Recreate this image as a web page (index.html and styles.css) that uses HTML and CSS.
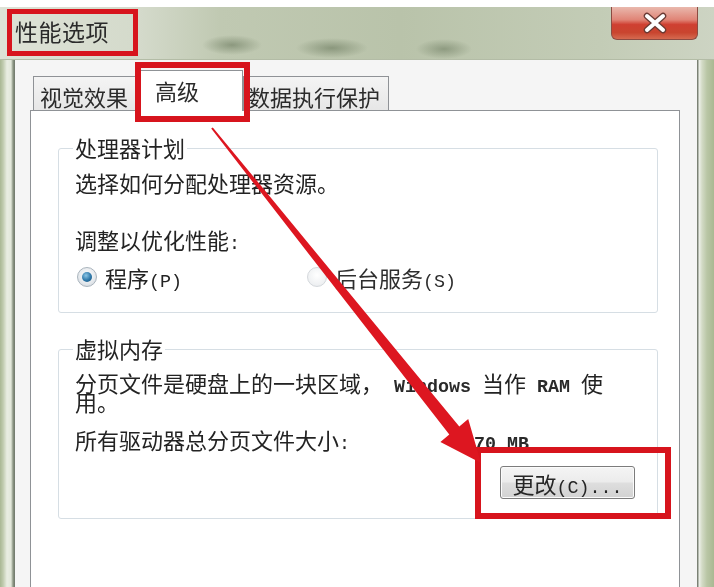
FILE: index.html
```html
<!DOCTYPE html>
<html lang="zh-CN">
<head>
<meta charset="utf-8">
<title>性能选项</title>
<link rel="stylesheet" href="styles.css">
</head>
<body>
<div class="screen">
  <div class="window">
    <div class="titlebar">
      <span class="title">性能选项</span>
      <div class="close">
        <svg width="26" height="22" viewBox="0 0 26 22">
          <path d="M5 4 L21 18 M21 4 L5 18" stroke="#6a3a34" stroke-width="6.5" stroke-linecap="round"/>
          <path d="M5 4 L21 18 M21 4 L5 18" stroke="#ffffff" stroke-width="4" stroke-linecap="round"/>
        </svg>
      </div>
    </div>
    <div class="frame-row">
      <div class="frame-l"></div>
      <div class="client">
        <div class="tabs">
          <div class="tab t1">视觉效果</div>
          <div class="tab active t2">高级</div>
          <div class="tab t3">数据执行保护</div>
        </div>
        <div class="panel">
          <fieldset class="group g1">
            <legend>处理器计划</legend>
            <p class="line">选择如何分配处理器资源。</p>
            <p class="line adjust">调整以优化性能<span class="hw">:</span></p>
            <div class="radios">
              <div class="radio"><span class="dot on"></span><span class="lab">程序<span class="hw">(P)</span></span></div>
              <div class="radio off"><span class="dot"></span><span class="lab">后台服务<span class="hw">(S)</span></span></div>
            </div>
          </fieldset>
          <fieldset class="group g2">
            <legend>虚拟内存</legend>
            <p class="wrap">分页文件是硬盘上的一块区域，<span class="hw b"> Windows </span>当作<span class="hw b"> RAM </span>使<br>用。</p>
            <div class="total"><span class="lbl">所有驱动器总分页文件大小<span class="hw">:</span></span><span class="val"><span class="hw b">4070 MB</span></span></div>
            <div class="btnrow"><button class="btn" type="button">更改<span class="hw">(C)...</span></button></div>
          </fieldset>
        </div>
      </div>
      <div class="frame-r"></div>
    </div>
  </div>
  <div class="mark mark-title"></div>
  <div class="mark mark-tab"></div>
  <div class="mark mark-btn"></div>
  <svg class="arrow" width="714" height="587" viewBox="0 0 714 587">
    <polygon points="212.8,127.4 459.3,426.4 468.2,419.1 481,463 440.4,441.9 449.3,434.6 211.2,128.6" fill="#dd1620"/>
  </svg>
</div>
</body>
</html>
```
FILE: styles.css
```css
* { box-sizing: border-box; }
html, body { margin: 0; padding: 0; }
body {
  width: 714px;
  height: 587px;
  overflow: hidden;
  background: #ffffff;
  font-family: "Noto Sans CJK SC", "Liberation Sans", sans-serif;
  color: #232323;
}
.screen {
  position: relative;
  width: 714px;
  height: 587px;
  padding-top: 7px;
  background: #ffffff;
}
.window {
  display: flex;
  flex-direction: column;
  height: 580px;
  filter: blur(0.3px);
}
.titlebar {
  height: 53px;
  display: flex;
  align-items: flex-start;
  padding-left: 15px;
  background:
    radial-gradient(ellipse 30px 10px at 232px 38px, rgba(105,120,92,0.6), rgba(105,120,92,0) 100%),
    radial-gradient(ellipse 36px 10px at 332px 41px, rgba(105,120,92,0.6), rgba(105,120,92,0) 100%),
    radial-gradient(ellipse 28px 10px at 444px 42px, rgba(105,120,92,0.55), rgba(105,120,92,0) 100%),
    linear-gradient(to right, #dde2d6 0, #d4dacb 140px, #c0c9b2 220px, #b9c3aa 400px, #c3ccb6 600px, #cdd4c3 714px);
  border-bottom: 1px solid #b3bca6;
}
.title {
  font-size: 23px;
  line-height: 26px;
  margin-top: 11px;
  letter-spacing: 0.5px;
  color: #2a2a2a;
}
.close {
  margin-left: auto;
  margin-right: 16px;
  width: 87px;
  height: 33px;
  display: flex;
  align-items: center;
  justify-content: center;
  border: 1px solid #8c4b42;
  border-top: none;
  border-radius: 0 0 6px 6px;
  background: linear-gradient(to bottom, #e9b8ad 0, #e08476 40%, #cf3f31 55%, #c9452f 80%, #d56a50 100%);
}
.frame-row {
  flex: 1;
  display: flex;
}
.frame-l {
  width: 15px;
  background: linear-gradient(to right, #a9b793 0, #bfcaad 3px, #e9ede2 7px, #e2e7da 11px, #8d9785 13px, #6d7568 15px);
}
.frame-r {
  width: 17px;
  background: linear-gradient(to right, #7b8275 0, #7b8275 1px, #eef1ea 2px, #d3dbc6 5px, #b9c6a5 10px, #a9b892 17px);
}
.client {
  flex: 1;
  display: flex;
  flex-direction: column;
  background: #f5f5f5;
  padding: 10px 17px 0 15px;
}
.tabs {
  display: flex;
  align-items: flex-end;
  height: 41px;
  margin-bottom: -1px;
  padding-left: 3px;
}
.tab {
  height: 35px;
  display: flex;
  align-items: center;
  padding-top: 3px;
  font-size: 22px;
  line-height: 26px;
  color: #2b2b2b;
  border: 1px solid #8f9296;
  border-bottom: none;
  background: linear-gradient(to bottom, #f4f4f4, #e6e6e6);
  white-space: nowrap;
}
.t1 { width: 104px; padding-left: 6px; }
.t3 { width: 146px; padding-left: 4px; }
.tab.active {
  position: relative;
  z-index: 1;
  width: 106px;
  height: 41px;
  padding-left: 17px;
  padding-top: 0;
  padding-bottom: 2px;
  background: #ffffff;
  border-color: #8f9296;
}
.panel {
  flex: 1;
  background: #ffffff;
  border: 1px solid #8f9296;
  border-bottom: none;
  padding: 25px 21px 0 27px;
}
.group {
  margin: 0;
  min-width: 0;
  border: 1px solid #d6dee4;
  border-radius: 3px;
  padding: 10px 16px 23px 16px;
}
.group legend {
  padding: 0 2px;
  margin-left: -2px;
  font-size: 22px;
  line-height: 22px;
  height: 24px;
}
.line {
  margin: 0;
  font-size: 22px;
  line-height: 24px;
}
.adjust { margin-top: 33px; }
.hw {
  font-family: "Liberation Mono", monospace;
  font-size: 18.33px;
  line-height: 0;
  white-space: pre;
}
.hw.b { font-weight: bold; color: #2a2a2a; }
.radios {
  display: flex;
  margin-top: 14px;
  height: 24px;
  align-items: center;
}
.radio {
  display: flex;
  align-items: center;
  font-size: 22px;
  line-height: 24px;
  white-space: nowrap;
}
.lab { display: block; line-height: 24px; }
.radio:first-child { width: 232px; padding-left: 2px; }
.dot {
  width: 20px;
  height: 20px;
  border-radius: 50%;
  margin-right: 8px;
  border: 1px solid #aab4bd;
  background: radial-gradient(circle at 50% 40%, #ffffff 0, #e4e8ec 60%, #c7cfd6 100%);
  display: flex;
  align-items: center;
  justify-content: center;
}
.dot.on::after {
  content: "";
  width: 10px;
  height: 10px;
  border-radius: 50%;
  background: radial-gradient(circle at 40% 35%, #8cc6e6 0, #2d77a8 55%, #174d74 100%);
}
.radio.off .dot {
  border-color: #d4d8dc;
  background: radial-gradient(circle at 50% 40%, #ffffff 0, #eef0f2 70%, #dfe3e6 100%);
}
.radio.off { color: #2e2e2e; }
.g2 { margin-top: 24px; padding: 12px 16px 19px 16px; }
.wrap {
  margin: 0;
  font-size: 22px;
  line-height: 19px;
}
.total {
  display: flex;
  margin-top: 16px;
  font-size: 22px;
  line-height: 24px;
}
.lbl { width: 377px; }
.val { display: block; }
.btnrow {
  display: flex;
  justify-content: flex-end;
  margin-top: 15px;
  padding-right: 6px;
}
.btn {
  width: 135px;
  height: 33px;
  padding: 0;
  font-family: "Noto Sans CJK SC", sans-serif;
  font-size: 22px;
  line-height: 24px;
  color: #262626;
  border: 1px solid #7c7c7c;
  border-radius: 3px;
  background: linear-gradient(to bottom, #f4f4f4 0, #ececec 48%, #dedede 52%, #d2d2d2 100%);
  box-shadow: inset 0 0 0 1px #fbfbfb;
}
.mark {
  position: absolute;
  border: 6px solid #d7141d;
}
.mark-title { left: 7px; top: 9px; width: 131px; height: 47px; border-width: 5px; }
.mark-tab { left: 135px; top: 62px; width: 115px; height: 60px; }
.mark-btn { left: 475px; top: 447px; width: 196px; height: 72px; }
.arrow {
  position: absolute;
  left: 0;
  top: 0;
  pointer-events: none;
}
```
